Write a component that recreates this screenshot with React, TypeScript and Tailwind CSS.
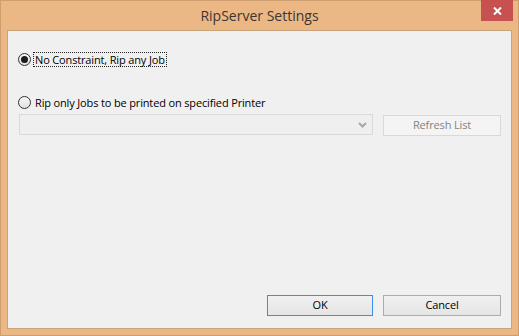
import React from "react";

function Radio({ checked }: { checked?: boolean }) {
  return (
    <span className="relative flex h-[13px] w-[13px] shrink-0 items-center justify-center rounded-full border border-[#333333] bg-gradient-to-b from-[#f6f6f6] to-[#e2e2e2]">
      {checked && <span className="h-[7px] w-[7px] rounded-full bg-[#1a1a1a]" />}
    </span>
  );
}

export default function App() {
  return (
    <div
      className="flex h-[336px] w-[519px] flex-col border border-[#cf9e6e] bg-[#ebb885] text-[11px] tracking-[-0.15px] text-black"
      style={{ fontFamily: '"Open Sans", "Noto Sans", Arial, sans-serif' }}
    >
      <div className="relative flex h-[29px] shrink-0 items-center justify-center">
        <span className="text-[14px] leading-none tracking-normal text-[#3c3530]">RipServer Settings</span>
        <div className="absolute right-[5px] top-[-1px] flex h-[21px] w-[32px] items-center justify-center bg-[#c75050]">
          <svg width="9" height="8" viewBox="0 0 9 8">
            <path d="M1 0.5 L8 7.5 M8 0.5 L1 7.5" stroke="white" strokeWidth="2" />
          </svg>
        </div>
      </div>
      <div className="mx-[6px] flex h-[299px] shrink-0 flex-col border border-[#c8a47c] bg-[#f0f0f0] pl-[10px] pr-[10px] pb-[12px]">
        <div className="mt-[21px] flex h-[15px] items-center">
          <Radio checked />
          <span className="ml-[2px] flex h-[15px] items-center border border-dotted border-[#222] px-[1px] leading-none">
            No Constraint, Rip any Job
          </span>
        </div>
        <div className="mt-[28px] flex h-[15px] items-center">
          <Radio />
          <span className="ml-[4px] leading-none">Rip only Jobs to be printed on specified Printer</span>
        </div>
        <div className="mt-[4px] flex items-start">
          <div className="ml-[1px] flex h-[21px] w-[354px] items-center justify-end border border-[#d9d9d9] bg-[#efefef] pr-[5px]">
            <svg width="9" height="6" viewBox="0 0 9 6">
              <path d="M1 1 L4.5 4.5 L8 1" stroke="#a6a6a6" strokeWidth="2" fill="none" />
            </svg>
          </div>
          <div className="ml-[10px] mt-[1px] flex h-[21px] w-[118px] items-center justify-center border border-[#d9d9d9] bg-[#f4f4f4] text-[#838383]">
            Refresh List
          </div>
        </div>
        <div className="mt-auto flex justify-end gap-[10px]">
          <div className="flex h-[21px] w-[106px] items-center justify-center border border-[#3c8ee6] bg-gradient-to-b from-[#f0f0f0] to-[#e5e5e5]">
            OK
          </div>
          <div className="flex h-[21px] w-[118px] items-center justify-center border border-[#acacac] bg-gradient-to-b from-[#f0f0f0] to-[#e5e5e5]">
            Cancel
          </div>
        </div>
      </div>
    </div>
  );
}
